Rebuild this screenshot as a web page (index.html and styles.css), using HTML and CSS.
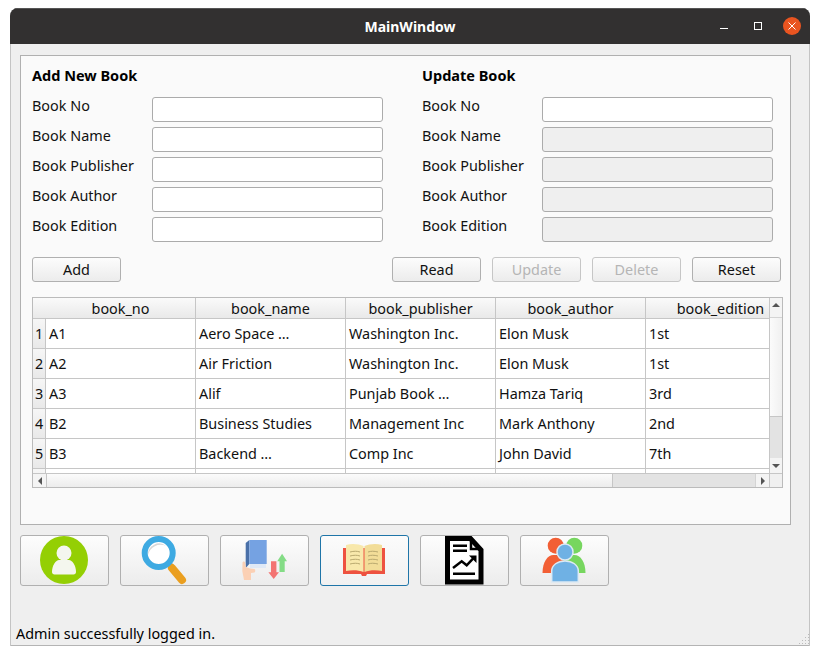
FILE: index.html
```html
<!DOCTYPE html>
<html lang="en">
<head>
    <meta charset="UTF-8">
    <title>MainWindow</title>
    <link rel="stylesheet" href="styles.css">
</head>
<body>
    <div class="window">
        <header class="titlebar">
            <span class="title">MainWindow</span>
            <span class="controls">
                <svg class="ctl" width="12" height="12" viewBox="0 0 12 12"><path d="M2 8.5h8" stroke="#fff" stroke-width="1"/></svg>
                <svg class="ctl" width="12" height="12" viewBox="0 0 12 12"><rect x="2.5" y="2.5" width="7" height="7" fill="none" stroke="#fff"/></svg>
                <svg class="ctl close" width="18" height="18" viewBox="0 0 18 18"><circle cx="9" cy="9" r="9" fill="#e95420"/><path d="M5.5 5.5l7 7M12.5 5.5l-7 7" stroke="#fff" stroke-width="1"/></svg>
            </span>
        </header>

        <main class="content">
            <section class="group">
                <div class="forms">
                    <form class="book-form">
                        <h2>Add New Book</h2>
                        <label>Book No</label><input type="text">
                        <label>Book Name</label><input type="text">
                        <label>Book Publisher</label><input type="text">
                        <label>Book Author</label><input type="text">
                        <label>Book Edition</label><input type="text">
                    </form>
                    <form class="book-form">
                        <h2>Update Book</h2>
                        <label>Book No</label><input type="text">
                        <label>Book Name</label><input type="text" disabled>
                        <label>Book Publisher</label><input type="text" disabled>
                        <label>Book Author</label><input type="text" disabled>
                        <label>Book Edition</label><input type="text" disabled>
                    </form>
                </div>

                <div class="actions">
                    <button class="btn add">Add</button>
                    <button class="btn">Read</button>
                    <button class="btn" disabled>Update</button>
                    <button class="btn" disabled>Delete</button>
                    <button class="btn">Reset</button>
                </div>

                <div class="table-box">
                    <div class="table-clip">
                        <table>
                            <thead>
                                <tr><th class="corner"></th><th>book_no</th><th>book_name</th><th>book_publisher</th><th>book_author</th><th>book_edition</th></tr>
                            </thead>
                            <tbody>
                                <tr><th>1</th><td>A1</td><td>Aero Space …</td><td>Washington Inc.</td><td>Elon Musk</td><td>1st</td></tr>
                                <tr><th>2</th><td>A2</td><td>Air Friction</td><td>Washington Inc.</td><td>Elon Musk</td><td>1st</td></tr>
                                <tr><th>3</th><td>A3</td><td>Alif</td><td>Punjab Book …</td><td>Hamza Tariq</td><td>3rd</td></tr>
                                <tr><th>4</th><td>B2</td><td>Business Studies</td><td>Management Inc</td><td>Mark Anthony</td><td>2nd</td></tr>
                                <tr><th>5</th><td>B3</td><td>Backend …</td><td>Comp Inc</td><td>John David</td><td>7th</td></tr>
                                <tr><th></th><td></td><td></td><td></td><td></td><td></td></tr>
                            </tbody>
                        </table>
                    </div>
                    <div class="vscroll">
                        <span class="arrow-btn up"><i class="tri-up"></i></span>
                        <span class="v-handle"></span>
                        <span class="v-track"></span>
                        <span class="arrow-btn down"><i class="tri-down"></i></span>
                    </div>
                    <div class="hscroll">
                        <span class="arrow-btn left"><i class="tri-left"></i></span>
                        <span class="h-handle"></span>
                        <span class="h-track"></span>
                        <span class="arrow-btn right"><i class="tri-right"></i></span>
                    </div>
                    <div class="scroll-corner"></div>
                </div>
            </section>

            <nav class="toolbar">
                <button class="tool">
                    <svg width="89" height="51" viewBox="0 0 89 51">
                        <circle cx="44" cy="25" r="24" fill="#94cf04"/>
                        <circle cx="44" cy="18" r="7.5" fill="#f4f6ee"/>
                        <path d="M32 37c0-7 4-12 7-12h10c3 0 7 5 7 12 0 1.5-1 2.5-2.5 2.5h-19C33 39.5 32 38.5 32 37z" fill="#f4f6ee"/>
                    </svg>
                </button>
                <button class="tool">
                    <svg width="89" height="51" viewBox="0 0 89 51">
                        <path d="M48 27l5 5" stroke="#9c9c9c" stroke-width="4"/>
                        <path d="M52 33l10 12" stroke="#ea9f20" stroke-width="8" stroke-linecap="round"/>
                        <circle cx="38.7" cy="18" r="11" fill="#fff"/>
                        <path d="M28 20a11 11 0 0 1 18-9a13 13 0 0 0-18 9z" fill="#d8d8d8"/>
                        <circle cx="38.7" cy="18" r="14" fill="none" stroke="#3eaae2" stroke-width="6"/>
                    </svg>
                </button>
                <button class="tool">
                    <svg width="89" height="51" viewBox="0 0 89 51">
                        <rect x="30" y="28" width="16" height="5" fill="#dfe9f6"/>
                        <path d="M25.7 8l3.6-3v24l-3.6 4z" fill="#4a70a8"/>
                        <rect x="29.3" y="5" width="17.4" height="24" fill="#75a2e2"/>
                        <path d="M22.5 28c0-2 2.5-2 2.7 0l.6 4 4.2 1.5 4.5.5c1 .5 1 3 0 3.5l-3.5.5V45h-7l-1.7-9z" fill="#fbd0b4"/>
                        <path d="M51 26.300h5.400V37.300h2.600L53.700 44l-5.300-6.700H51z" fill="#f37472"/>
                        <path d="M59.500 37h5.200V26.300h2.300l-4.900-7.600-4.900 7.600h2.300z" fill="#84dc86"/>
                    </svg>
                </button>
                <button class="tool active">
                    <svg width="89" height="51" viewBox="0 0 89 51">
                        <path d="M23 13h42v26H47l-1 2h-4l-1-2H23z" fill="#ee5240"/>
                        <path d="M26 10c6-2 13-1 17.5 1v26c-5-2-12-2-17.5-1z" fill="#f8e8ab"/>
                        <path d="M62 10c-6-2-13-1-17.5 1v26c5-2 12-2 17.5-1z" fill="#f2dd98"/>
                        <path d="M30 17c4-1 7-1 10 0M30 21c4-1 7-1 10 0M30 25c4-1 7-1 10 0M30 29c4-1 7-1 10 0M48 17c3-1 6-1 10 0M48 21c3-1 6-1 10 0M48 25c3-1 6-1 10 0M48 29c3-1 6-1 10 0" fill="none" stroke="#b9a96f" stroke-width="1"/>
                    </svg>
                </button>
                <button class="tool">
                    <svg width="89" height="51" viewBox="0 0 89 51">
                        <path d="M27.500 3.500h23l10.500 11.500V47H27.500z" fill="#fff" stroke="#000" stroke-width="5"/>
                        <path d="M51 4v10h10" fill="none" stroke="#000" stroke-width="2.500"/>
                        <path d="M33 10.700h14M33 15.700h14M33 38.700h22" stroke="#000" stroke-width="2.500"/>
                        <path d="M33 33l8.700-6.700 5 4 7-7.500" fill="none" stroke="#000" stroke-width="2.500"/>
                        <path d="M49 20.500h7.500v7.500z" fill="#000"/>
                    </svg>
                </button>
                <button class="tool">
                    <svg width="89" height="51" viewBox="0 0 89 51">
                        <circle cx="35.700" cy="10.700" r="8" fill="#f25f35"/>
                        <circle cx="54.300" cy="10.700" r="8" fill="#77d65f"/>
                        <path d="M22.500 38c0-11 5-18 11-18h11v18z" fill="#f25f35"/>
                        <path d="M65.500 38c0-11-5-18-11-18h-11v18z" fill="#77d65f"/>
                        <circle cx="45" cy="17" r="8" fill="#6fb1e4" stroke="#dce9f3" stroke-width="1.500"/>
                        <path d="M31.700 47V36c0-6 6-10 13.300-10s13.300 4 13.300 10v11z" fill="#6fb1e4" stroke="#dce9f3" stroke-width="1.500"/>
                    </svg>
                </button>
            </nav>
        </main>

        <footer class="statusbar">
            <span>Admin successfully logged in.</span>
            <span class="grip"></span>
        </footer>
    </div>
</body>
</html>
```

FILE: styles.css
```css
* {
    box-sizing: border-box;
}

html, body {
    margin: 0;
    padding: 0;
    background-color: #fff;
}

body {
    font-family: "Noto Sans", "Open Sans", sans-serif;
    font-size: 14.4px;
    color: #111;
}

.window {
    width: 800px;
    height: 638px;
    margin: 8px 10px 0;
    background-color: #efefef;
    border-radius: 8px 8px 0 0;
    box-shadow: inset 1px 0 #c4c4c4, inset -1px 0 #c4c4c4, inset 0 -1px #b4b4b4;
    display: flex;
    flex-direction: column;
    overflow: hidden;
}

.titlebar {
    height: 36px;
    flex: none;
    background-color: #323030;
    color: #fff;
    display: flex;
    align-items: center;
    justify-content: center;
    position: relative;
    border-top: 1px solid #555;
}

.title {
    font-size: 14px;
    font-weight: 700;
}

.controls {
    position: absolute;
    right: 9px;
    top: 8px;
    display: flex;
    align-items: center;
    gap: 22px;
}

.close {
    margin-left: -3px;
}

.content {
    padding: 11px 0 0 10px;
}

.group {
    width: 771px;
    height: 470px;
    border: 1px solid #b0b0b0;
    background-color: #fafafa;
    padding: 11px 0 0 11px;
}

.forms {
    display: flex;
    gap: 39px;
}

.book-form {
    width: 351px;
    display: grid;
    grid-template-columns: 120px 231px;
    grid-auto-rows: 25px;
    row-gap: 5px;
}

.book-form h2 {
    grid-column: 1 / 3;
    margin: -2px 0 0;
    font-size: 14.5px;
    line-height: 20px;
    height: 20px;
    font-weight: 700;
    color: #000;
}

.book-form label {
    line-height: 20px;
    margin-top: -1px;
}

.book-form input {
    height: 25px;
    border: 1px solid #ababab;
    border-radius: 3px;
    background-color: #fff;
    padding: 0 4px;
    font: inherit;
}

.book-form input:disabled {
    background-color: #efefef;
}

.actions {
    width: 749px;
    margin-top: 15px;
    display: flex;
    gap: 11px;
}

.btn {
    width: 89px;
    height: 25px;
    padding: 0;
    border: 1px solid #b0b0b0;
    border-radius: 3px;
    background: linear-gradient(#fcfcfc, #ececec);
    font: inherit;
    color: #111;
}

.btn:disabled {
    color: #b5b5b5;
    border-color: #c6c6c6;
}

.add {
    margin-right: auto;
}

.table-box {
    width: 751px;
    height: 191px;
    margin-top: 15px;
    border: 1px solid #bbb;
    background-color: #fff;
    display: grid;
    grid-template-columns: 736px 13px;
    grid-template-rows: 175px 14px;
}

.table-clip {
    overflow: hidden;
}

table {
    width: 763px;
    border-collapse: separate;
    border-spacing: 0;
    table-layout: fixed;
}

th, td {
    padding: 0;
    font-weight: 400;
    white-space: nowrap;
    border-right: 1px solid #c6c6c6;
    border-bottom: 1px solid #c6c6c6;
    overflow: hidden;
}

th:first-child {
    width: 13px;
}

thead th {
    width: 150px;
    height: 21px;
    line-height: 19px;
    background: linear-gradient(#fafafa, #e9e9e9);
}

thead .corner {
    width: 13px;
    border-right: none;
}

tbody th {
    background: linear-gradient(#f6f6f6, #e9e9e9);
}

tbody tr {
    height: 30px;
}

td {
    padding-left: 3px;
}

.vscroll {
    border-left: 1px solid #c6c6c6;
    display: flex;
    flex-direction: column;
    background-color: #e3e3e3;
}

.arrow-btn {
    flex: none;
    display: flex;
    align-items: center;
    justify-content: center;
    background-color: #f4f4f4;
}

.up {
    height: 20px;
    border-bottom: 1px solid #d4d4d4;
    align-items: flex-start;
    padding-top: 5px;
}

.down {
    height: 15px;
}

.v-handle {
    height: 99px;
    background: linear-gradient(90deg, #fbfbfb, #f0f0f0);
    border-bottom: 1px solid #c6c6c6;
}

.v-track {
    flex: 1;
}

.hscroll {
    border-top: 1px solid #c6c6c6;
    display: flex;
    background-color: #e3e3e3;
}

.left, .right {
    width: 14px;
}

.left {
    border-right: 1px solid #c6c6c6;
}

.right {
    border-left: 1px solid #d4d4d4;
}

.h-handle {
    width: 566px;
    background: linear-gradient(#fbfbfb, #ececec);
    border-right: 1px solid #c6c6c6;
}

.h-track {
    flex: 1;
}

.scroll-corner {
    border-top: 1px solid #c6c6c6;
    border-left: 1px solid #c6c6c6;
    background-color: #f0f0f0;
}

.tri-up, .tri-down, .tri-left, .tri-right {
    width: 0;
    height: 0;
    border: 4px solid transparent;
}

.tri-up {
    border-top: none;
    border-bottom: 4px solid #555;
}

.tri-down {
    border-bottom: none;
    border-top: 4px solid #555;
}

.tri-left {
    border-left: none;
    border-right: 4px solid #555;
}

.tri-right {
    border-right: none;
    border-left: 4px solid #555;
}

.toolbar {
    margin-top: 10px;
    display: flex;
    gap: 11px;
}

.tool {
    width: 89px;
    height: 51px;
    padding: 0;
    border: 1px solid #b0b0b0;
    border-radius: 3px;
    background: linear-gradient(#fdfdfd, #ececec);
    position: relative;
}

.tool svg {
    position: absolute;
    left: -1px;
    top: -1px;
}

.tool.active {
    border-color: #1f75a8;
    background: linear-gradient(#fbfbfb, #f1f1f1);
}

.statusbar {
    margin-top: auto;
    height: 23px;
    padding: 0 0 3px 6px;
    display: flex;
    align-items: center;
    justify-content: space-between;
    color: #000;
}

.grip {
    width: 11px;
    height: 11px;
    margin: 11px 1px 0 0;
    background-image: radial-gradient(#bbb 1px, transparent 1px);
    background-size: 3px 3px;
    clip-path: polygon(100% 0, 100% 100%, 0 100%);
}
```
